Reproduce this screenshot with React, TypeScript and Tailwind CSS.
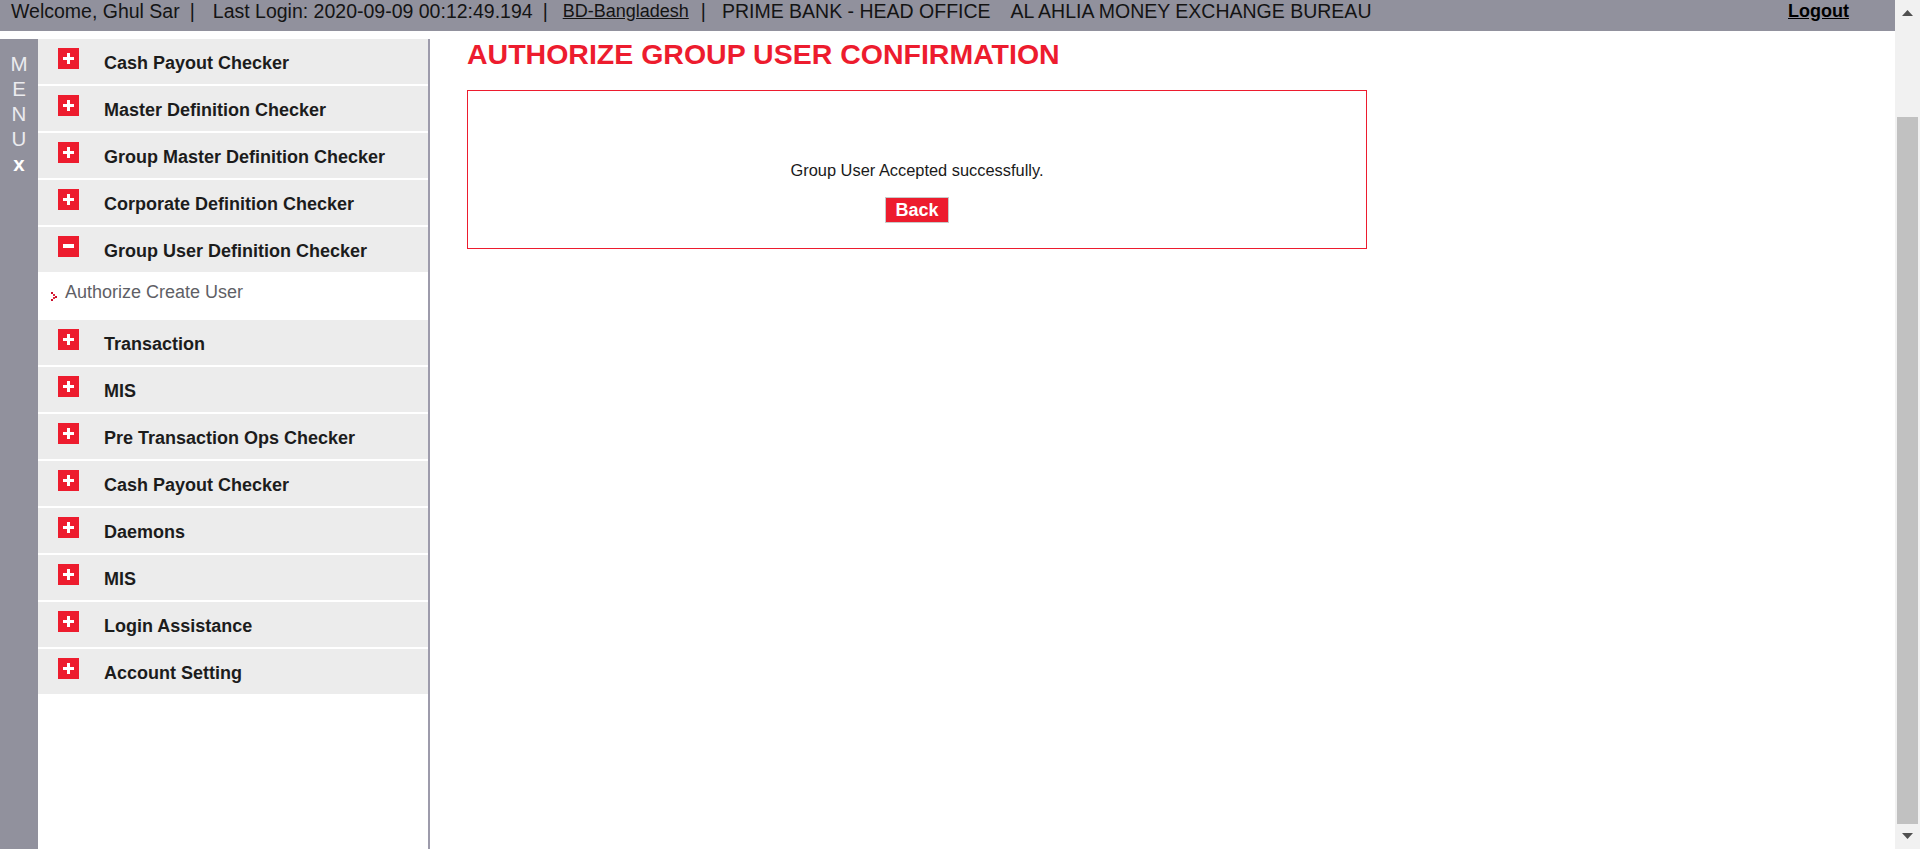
import React from "react";

const RED = "#ed1c2e";

function Box({ plus }: { plus: boolean }) {
  return (
    <svg width="21" height="21" viewBox="0 0 21 21" className="shrink-0">
      <rect width="21" height="21" fill={RED} />
      {plus ? (
        <>
          <rect x="5" y="9" width="11" height="3" fill="#fff" />
          <rect x="9" y="5" width="3" height="11" fill="#fff" />
        </>
      ) : (
        <rect x="5" y="8" width="11" height="4" fill="#fff" />
      )}
    </svg>
  );
}

function Row({ label, open }: { label: string; open?: boolean }) {
  return (
    <div className="h-[45px] mb-[2px] bg-[#ececec] flex items-start">
      <div className="ml-[20px] mt-[9px]">
        <Box plus={!open} />
      </div>
      <div className="ml-[25px] pt-[14px] leading-[20px] text-[18px] font-bold text-[#1c1c1c] whitespace-nowrap">
        {label}
      </div>
    </div>
  );
}

export default function App() {
  const before = [
    "Cash Payout Checker",
    "Master Definition Checker",
    "Group Master Definition Checker",
    "Corporate Definition Checker",
  ];
  const after = [
    "Transaction",
    "MIS",
    "Pre Transaction Ops Checker",
    "Cash Payout Checker",
    "Daemons",
    "MIS",
    "Login Assistance",
    "Account Setting",
  ];
  return (
    <div className="flex h-[849px] w-[1920px] overflow-hidden bg-white font-[family-name:'Liberation_Sans',Arial,sans-serif]">
      <div className="flex-1 flex flex-col min-w-0">
        {/* Header */}
        <div className="h-[31px] shrink-0 bg-[#91919d] flex items-start pl-[11px] pr-[46px] text-[19.5px] leading-[22px] text-[#141414] whitespace-nowrap">
          <span>Welcome, Ghul Sar</span>
          <span className="ml-[10px]">|</span>
          <span className="ml-[18px]">Last Login: 2020-09-09 00:12:49.194</span>
          <span className="ml-[10px]">|</span>
          <span className="ml-[15px] text-[18px] underline">BD-Bangladesh</span>
          <span className="ml-[12px]">|</span>
          <span className="ml-[16px]">PRIME BANK - HEAD OFFICE</span>
          <span className="ml-[20px]">AL AHLIA MONEY EXCHANGE BUREAU</span>
          <span className="ml-auto text-[18px] font-bold underline text-black">Logout</span>
        </div>

        {/* Body */}
        <div className="flex flex-1 mt-[8px] min-h-0">
          {/* MENU strip */}
          <div className="w-[38px] shrink-0 bg-[#91919d] flex flex-col items-center pt-[12px] text-[20.5px] leading-[25px] text-[#ebebef]">
            <span>M</span>
            <span>E</span>
            <span>N</span>
            <span>U</span>
            <span className="font-bold text-white">x</span>
          </div>

          {/* Sidebar */}
          <div className="w-[392px] shrink-0 border-r-2 border-[#9d9bab] bg-white">
            {before.map((l, i) => (
              <Row key={"b" + i} label={l} />
            ))}
            <Row label="Group User Definition Checker" open />
            <div className="h-[46px] bg-white flex items-start">
              <svg width="6" height="9" viewBox="0 0 6 9" className="ml-[13px] mt-[18px] shrink-0">
                <rect x="0" y="0" width="2" height="2" fill="#c8102e" />
                <rect x="2" y="2" width="2" height="2" fill="#e0263a" />
                <rect x="4" y="4" width="2" height="2" fill="#c8102e" />
                <rect x="2" y="5" width="2" height="2" fill="#e0263a" />
                <rect x="0" y="7" width="2" height="2" fill="#c8102e" />
              </svg>
              <div className="ml-[8px] pt-[8px] leading-[20px] text-[18px] text-[#5f5f66] whitespace-nowrap">
                Authorize Create User
              </div>
            </div>
            {after.map((l, i) => (
              <Row key={"a" + i} label={l} />
            ))}
          </div>

          {/* Main */}
          <div className="flex-1 pl-[37px] pt-[1px]">
            <div className="text-[28.5px] leading-[28px] font-bold text-[#ed1c2e] whitespace-nowrap">
              AUTHORIZE GROUP USER CONFIRMATION
            </div>
            <div className="mt-[22px] w-[900px] h-[159px] border border-[#ed1c2e] flex flex-col items-center pt-[70px]">
              <div className="text-[16.4px] leading-[18px] text-[#1a1a1a]">
                Group User Accepted successfully.
              </div>
              <button className="mt-[18px] w-[64px] h-[26px] bg-[#ed1c2e] border border-[#c9c9c9] text-white font-bold text-[18px] leading-[24px] flex items-center justify-center">
                Back
              </button>
            </div>
          </div>
        </div>
      </div>

      {/* Scrollbar */}
      <div className="w-[25px] shrink-0 bg-[#f1f1f1] flex flex-col items-center pt-[10px]">
        <svg width="11" height="6" viewBox="0 0 11 6">
          <polygon points="0,6 5.5,0 11,6" fill="#505050" />
        </svg>
        <div className="mt-[101px] h-[707px] w-[21px] bg-[#c1c1c1]" />
        <svg width="11" height="6" viewBox="0 0 11 6" className="mt-[9px]">
          <polygon points="0,0 11,0 5.5,6" fill="#505050" />
        </svg>
      </div>
    </div>
  );
}
